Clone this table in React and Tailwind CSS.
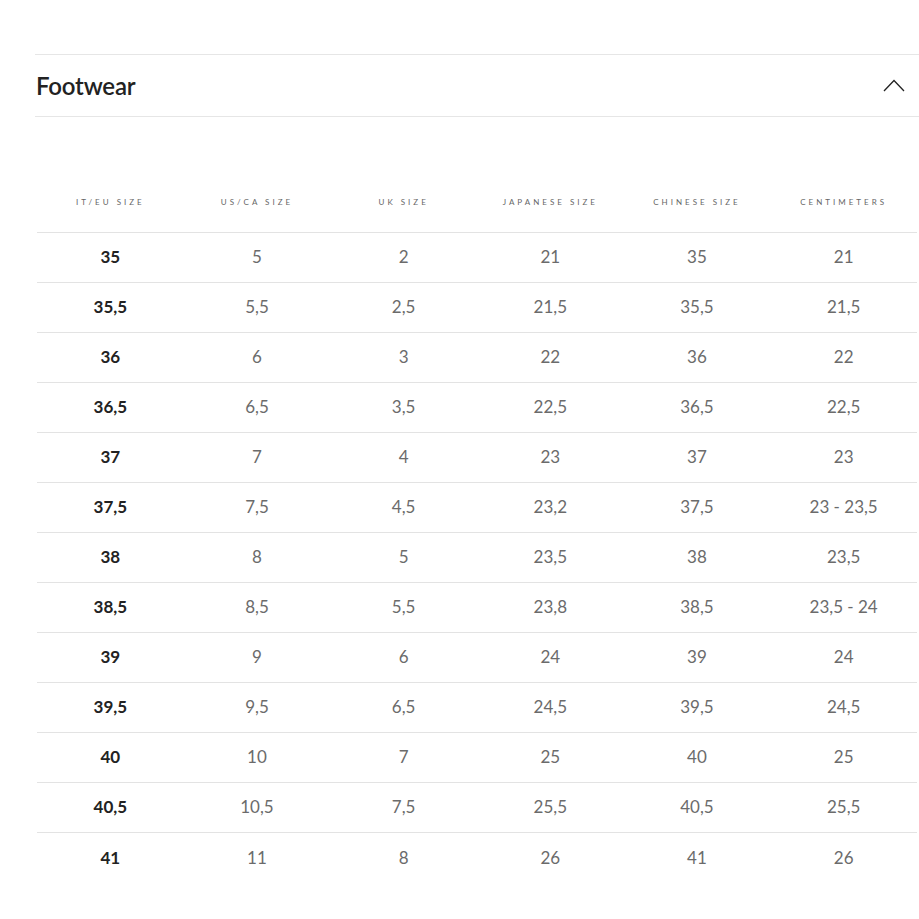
import React from 'react'

const rows = [
  ['35', '5', '2', '21', '35', '21'],
  ['35,5', '5,5', '2,5', '21,5', '35,5', '21,5'],
  ['36', '6', '3', '22', '36', '22'],
  ['36,5', '6,5', '3,5', '22,5', '36,5', '22,5'],
  ['37', '7', '4', '23', '37', '23'],
  ['37,5', '7,5', '4,5', '23,2', '37,5', '23 - 23,5'],
  ['38', '8', '5', '23,5', '38', '23,5'],
  ['38,5', '8,5', '5,5', '23,8', '38,5', '23,5 - 24'],
  ['39', '9', '6', '24', '39', '24'],
  ['39,5', '9,5', '6,5', '24,5', '39,5', '24,5'],
  ['40', '10', '7', '25', '40', '25'],
  ['40,5', '10,5', '7,5', '25,5', '40,5', '25,5'],
  ['41', '11', '8', '26', '41', '26'],
]

const heads = ['IT/EU SIZE', 'US/CA SIZE', 'UK SIZE', 'JAPANESE SIZE', 'CHINESE SIZE', 'CENTIMETERS']

export default function App() {
  return (
    <div className="bg-white min-h-[919px] pt-[54px] pl-[35px] font-['Lato','Noto_Sans',sans-serif]">
      <div className="border-t border-b border-[#e6e6e6] h-[63px] flex items-center justify-between pl-[1px] pr-[14px]">
        <h2 className="text-[24px] font-semibold text-[#222] tracking-[-0.2px]">Footwear</h2>
        <svg width="22" height="13" viewBox="0 0 22 13" fill="none" stroke="#222" strokeWidth="1.3">
          <path d="M1 12 L11 1.5 L21 12" />
        </svg>
      </div>

      <table className="w-[880px] ml-[2px] mt-[55px] table-fixed border-collapse">
        <thead>
          <tr className="h-[60px]">
            {heads.map((h) => (
              <th key={h} className="text-[8px] font-normal tracking-[3px] text-[#666] align-middle">
                {h}
              </th>
            ))}
          </tr>
        </thead>
        <tbody>
          {rows.map((r, i) => (
            <tr key={i} className="h-[50px] border-t border-[#e3e3e3]">
              {r.map((c, j) => (
                <td
                  key={j}
                  className={`text-center text-[17px] ${j === 0 ? 'font-bold text-[#222]' : 'text-[#6b6b6b]'}`}
                >
                  {c}
                </td>
              ))}
            </tr>
          ))}
        </tbody>
      </table>
    </div>
  )
}
